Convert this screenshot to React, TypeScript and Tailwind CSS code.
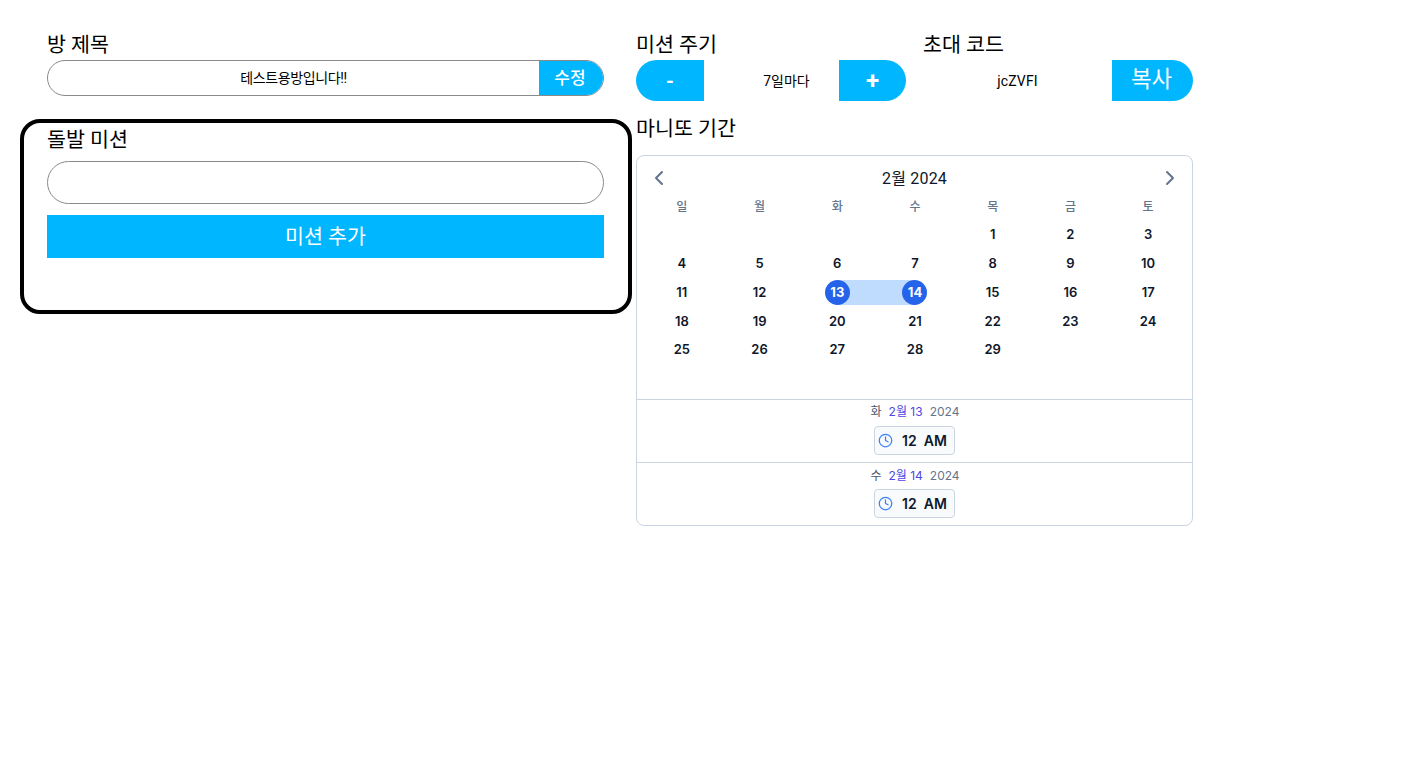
import React from 'react';
import { ChevronLeft, ChevronRight, Clock } from 'lucide-react';

const BASE_FONT = "font-['Roboto','Noto_Sans_CJK_KR',sans-serif]";
const CAL_FONT = "font-['Inter','Noto_Sans_CJK_KR',sans-serif]";

const WEEK_DAYS = ['일', '월', '화', '수', '목', '금', '토'];
const DAYS: (number | null)[] = [
  null, null, null, null, 1, 2, 3,
  4, 5, 6, 7, 8, 9, 10,
  11, 12, 13, 14, 15, 16, 17,
  18, 19, 20, 21, 22, 23, 24,
  25, 26, 27, 28, 29, null, null,
];

const Label: React.FC<{ children: React.ReactNode; className?: string }> = ({ children, className = '' }) => (
  <div className={`text-[20.6px] leading-[28px] text-black ${className}`}>{children}</div>
);

const DayCell: React.FC<{ day: number | null }> = ({ day }) => {
  if (day === null) return <div className="h-[28.8px]" />;
  if (day === 13 || day === 14) {
    return (
      <div className="h-[28.8px] flex items-center">
        <div
          className={`w-full h-[25px] flex justify-center ${
            day === 13
              ? 'bg-[linear-gradient(to_right,transparent_50%,#bfdbfe_50%)]'
              : 'bg-[linear-gradient(to_right,#bfdbfe_50%,transparent_50%)]'
          }`}
        >
          <div className="w-[25px] h-[25px] rounded-full bg-[#2563eb] text-white font-bold text-[13px] flex items-center justify-center">
            {day}
          </div>
        </div>
      </div>
    );
  }
  return <div className="h-[28.8px] flex items-center justify-center text-[13px] font-semibold text-[#0f172a]">{day}</div>;
};

const TimeRow: React.FC<{ weekday: string; date: string; last?: boolean }> = ({ weekday, date, last }) => (
  <div className={`h-[63px] flex flex-col items-center ${last ? 'pt-[5px]' : 'pt-[4px] border-b border-[#cbd5e1]'}`}>
    <div className="text-[12px] leading-[16px] flex gap-[7px] pl-[1px] text-[#64748b]">
      <span className="text-[#475569]">{weekday}</span>
      <span className="text-[#4f46e5]">{date}</span>
      <span>2024</span>
    </div>
    <div
      className={`${last ? 'mt-[5px]' : 'mt-[6px]'} w-[81px] h-[29px] rounded-[4px] border border-[#cbd5e1] bg-[#f8fafc] flex items-center pl-[3px]`}
    >
      <Clock className="w-[15px] h-[15px] text-[#3b82f6]" strokeWidth={2} />
      <span className="ml-[9px] text-[14px] font-semibold text-[#0f172a] whitespace-pre">12  AM</span>
    </div>
  </div>
);

export default function App() {
  return (
    <div className={`${BASE_FONT} min-h-screen bg-white flex items-start pl-[20px] pt-[31px]`}>
      {/* Left column */}
      <div className="w-[612px]">
        <div className="pl-[27px] pr-[28px]">
          <Label>방 제목</Label>
          <div className="mt-[1px] h-[36px] flex rounded-full border border-[#8a8a8a] overflow-hidden">
            <div className="flex-1 flex items-center justify-center pt-[1px] text-[14px] tracking-[-0.4px] text-black">테스트용방입니다!!</div>
            <button className="w-[64px] pr-[2px] pt-[1px] bg-[#00b7ff] text-white text-[17px] font-medium">수정</button>
          </div>
        </div>

        <div className="mt-[23px] h-[195px] rounded-[20px] border-[4px] border-black pl-[23px] pr-[24px] pt-[3px]">
          <Label>돌발 미션</Label>
          <div className="mt-[7px] h-[43px] rounded-full border border-[#8a8a8a]" />
          <button className="mt-[11px] w-full h-[43px] pt-[2px] bg-[#00b7ff] text-white text-[20.6px]">미션 추가</button>
        </div>
      </div>

      {/* Right column */}
      <div className="ml-[4px] w-[557px]">
        <div className="flex">
          <div className="w-[287px]">
            <Label>미션 주기</Label>
            <div className="mt-[1px] flex h-[41px] w-[270px]">
              <button className="w-[68px] rounded-l-full bg-[#00b7ff] text-white text-xl font-bold">-</button>
              <div className="flex-1 flex items-center justify-center pl-[30px] pt-[1px] text-[14px] text-black">7일마다</div>
              <button className="w-[67px] rounded-r-full bg-[#00b7ff] text-white text-2xl font-bold">+</button>
            </div>
          </div>
          <div className="flex-1">
            <Label>초대 코드</Label>
            <div className="mt-[1px] flex h-[41px]">
              <div className="flex-1 flex items-center justify-center pt-[1px] text-[14px] tracking-[0.2px] text-black">jcZVFI</div>
              <button className="w-[81px] pr-[2px] pb-[2px] rounded-r-full bg-[#00b7ff] text-white text-[22.4px]">복사</button>
            </div>
          </div>
        </div>

        <Label className="mt-[14px]">마니또 기간</Label>

        <div className="mt-[12px] h-[371px] rounded-[8px] border border-[#cbd5e1] overflow-hidden">
          <div className={`${CAL_FONT} h-[244px] border-b border-[#cbd5e1] pl-[6px] pr-[5px]`}>
            <div className="h-[36px] flex items-center justify-between pl-[4px] pr-[5px] pt-[10px] pb-[2px]">
              <ChevronLeft className="w-[24px] h-[24px] text-[#64748b]" strokeWidth={2} />
              <div className={`${BASE_FONT} pt-[2px] text-[16px] tracking-[0.2px] text-[#0f172a]`}>2월 2024</div>
              <ChevronRight className="w-[24px] h-[24px] text-[#64748b]" strokeWidth={2} />
            </div>
            <div className="grid grid-cols-7">
              {WEEK_DAYS.map((d) => (
                <div key={d} className={`${BASE_FONT} h-[28.5px] pt-[1px] flex items-center justify-center text-[12px] font-medium text-[#64748b]`}>
                  {d}
                </div>
              ))}
            </div>
            <div className="grid grid-cols-7">
              {DAYS.map((d, i) => (
                <DayCell key={i} day={d} />
              ))}
            </div>
          </div>
          <div className={CAL_FONT}>
            <TimeRow weekday="화" date="2월 13" />
            <TimeRow weekday="수" date="2월 14" last />
          </div>
        </div>
      </div>
    </div>
  );
}
